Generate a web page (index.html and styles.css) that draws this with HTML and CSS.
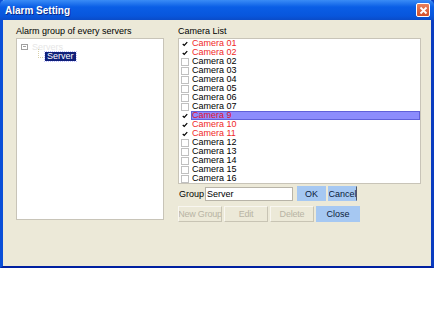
FILE: index.html
```html
<!DOCTYPE html>
<html lang="en">
<head>
  <meta charset="UTF-8">
  <title>Alarm Setting</title>
  <link rel="stylesheet" href="styles.css">
</head>
<body>
  <div class="window">
    <div class="titlebar">
      <span class="title">Alarm Setting</span>
      <span class="close-x">
        <svg width="9" height="9" viewBox="0 0 9 9"><path d="M1.5 1.5 L7.5 7.5 M7.5 1.5 L1.5 7.5" stroke="#fff" stroke-width="1.8"/></svg>
      </span>
    </div>

    <div class="content">
      <div class="pane left">
        <div class="label">Alarm group of every servers</div>
        <div class="tree">
          <div class="node root">
            <span class="expander"></span>
            <span class="root-text">Servers</span>
          </div>
          <div class="node child">
            <span class="branch"></span>
            <span class="selected">Server</span>
          </div>
        </div>
      </div>

      <div class="pane right">
        <div class="label">Camera List</div>
        <div class="list" id="camera-list"></div>

        <div class="group-row">
          <span class="group-label">Group</span>
          <input class="group-input" type="text" value="Server">
          <button class="btn blue ok">OK</button>
          <button class="btn blue cancel">Cancel</button>
        </div>

        <div class="button-row">
          <button class="btn off">New Group</button>
          <button class="btn off">Edit</button>
          <button class="btn off">Delete</button>
          <button class="btn blue">Close</button>
        </div>
      </div>
    </div>
  </div>

<script>
const cameras = [
  { name: "Camera 01", on: true },
  { name: "Camera 02", on: true },
  { name: "Camera 02", on: false },
  { name: "Camera 03", on: false },
  { name: "Camera 04", on: false },
  { name: "Camera 05", on: false },
  { name: "Camera 06", on: false },
  { name: "Camera 07", on: false },
  { name: "Camera 9", on: true, current: true },
  { name: "Camera 10", on: true },
  { name: "Camera 11", on: true },
  { name: "Camera 12", on: false },
  { name: "Camera 13", on: false },
  { name: "Camera 14", on: false },
  { name: "Camera 15", on: false },
  { name: "Camera 16", on: false }
];

const list = document.getElementById("camera-list");
cameras.forEach(c => {
  const row = document.createElement("div");
  row.className = "row" + (c.on ? " on" : "") + (c.current ? " current" : "");
  const tick = c.on
    ? '<svg width="8" height="8" viewBox="0 0 8 8"><path d="M1 4 L3 6 L7 1.5" fill="none" stroke="#000" stroke-width="1.6"/></svg>'
    : "";
  row.innerHTML = `<span class="box">${tick}</span><span class="name">${c.name}</span>`;
  list.appendChild(row);
});
</script>
</body>
</html>
```

FILE: styles.css
```css
body {
  margin: 0;
  background: #fff;
  font-family: "Liberation Sans", Arial, sans-serif;
}
.window {
  width: 428px;
  height: 266px;
  background: #ece9d8;
  border-left: 3px solid #0a4fd8;
  border-right: 3px solid #0a3cc0;
  border-bottom: 2px solid #0020a0;
  display: flex;
  flex-direction: column;
}
.titlebar {
  height: 20px;
  margin: 0 -3px;
  padding: 0 4px 0 5px;
  background: linear-gradient(#3a8cf6, #0a5ee6 35%, #0856dc 80%, #0a4cc8);
  border-radius: 5px 5px 0 0;
  display: flex;
  align-items: center;
  justify-content: space-between;
}
.title {
  color: #fff;
  font-size: 10px;
  font-weight: bold;
  text-shadow: 1px 1px 0 #0a2a8a;
}
.close-x {
  width: 12px;
  height: 12px;
  border: 1px solid #fff;
  border-radius: 2px;
  background: linear-gradient(#e8805c, #d4502a);
  display: flex;
  align-items: center;
  justify-content: center;
}
.content {
  display: flex;
  gap: 14px;
  padding: 5px 10px 0 13px;
}
.pane {
  display: flex;
  flex-direction: column;
}
.label {
  height: 13px;
  font-size: 9px;
  color: #000;
  line-height: 13px;
}
.left {
  width: 148px;
}
.tree {
  height: 182px;
  box-sizing: border-box;
  background: #fff;
  border: 1px solid #c8c4b8;
  padding: 3px 4px;
  font-size: 9px;
}
.node {
  display: flex;
  align-items: center;
  height: 9px;
}
.expander {
  width: 5px;
  height: 4px;
  border: 1px solid #a0a0a0;
  background: linear-gradient(#a0a0a0, #a0a0a0) center / 3px 1px no-repeat;
}
.root-text {
  margin-left: 4px;
  color: #e6e6e6;
}
.child {
  height: 10px;
  padding-left: 17px;
}
.branch {
  width: 6px;
  height: 8px;
  margin-top: -6px;
  border-left: 1px dotted #d8d0a8;
  border-bottom: 1px dotted #d8d0a8;
}
.selected {
  background: #10207a;
  color: #fff;
  padding: 0 2px;
  line-height: 9px;
  outline: 1px dotted #c0c0ff;
}
.right {
  width: 243px;
}
.list {
  height: 144px;
  background: #fff;
  border: 1px solid #c8c4b8;
  padding: 0 0 0 2px;
  font-size: 9px;
}
.row {
  display: flex;
  align-items: center;
  height: 9px;
}
.box {
  width: 6px;
  height: 6px;
  border: 1px solid #c0c0c0;
  margin-right: 3px;
  display: flex;
  align-items: center;
  justify-content: center;
}
.row.on .box {
  border-color: #fff;
}
.name {
  flex: 1;
  line-height: 9px;
  color: #000;
}
.row.on .name {
  color: #f02828;
}
.row.current .name {
  background: #8c8cfc;
  color: #e01030;
  box-shadow: inset 0 0 0 1px #6060d8;
  padding-left: 1px;
  margin-left: -1px;
}
.group-row {
  display: flex;
  align-items: center;
  margin-top: 2px;
  height: 15px;
}
.group-label {
  font-size: 9px;
  width: 26px;
  padding-left: 1px;
}
.group-input {
  width: 88px;
  height: 14px;
  box-sizing: border-box;
  border: 1px solid #b8b4a8;
  padding: 0 1px;
  font-family: "Liberation Sans", Arial, sans-serif;
  font-size: 9px;
  margin-right: 4px;
}
.btn {
  height: 15px;
  box-sizing: border-box;
  font-family: "Liberation Sans", Arial, sans-serif;
  font-size: 9px;
  padding: 0;
  border: 1px solid #ece9d8;
  display: flex;
  align-items: center;
  justify-content: center;
  white-space: nowrap;
  overflow: hidden;
}
.blue {
  background: #a6c8f2;
  color: #0a1a3a;
  border-color: #a6c8f2;
}
.ok {
  width: 29px;
  margin-right: 2px;
}
.cancel {
  width: 29px;
  border-right-color: #505868;
}
.button-row {
  display: flex;
  gap: 2px;
  margin-top: 5px;
}
.button-row .btn {
  width: 44px;
  height: 16px;
}
.off {
  background: #ece9d8;
  color: #b8b4a4;
  border-color: #f8f6f0 #c8c4b4 #c8c4b4 #f8f6f0;
  font-size: 9px;
  letter-spacing: -0.2px;
}
```
